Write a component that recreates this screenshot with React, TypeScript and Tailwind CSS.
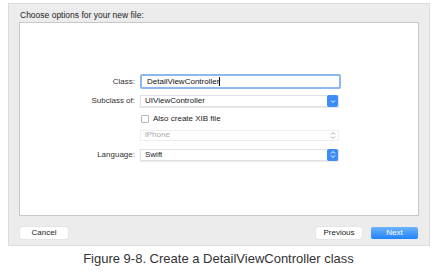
import React from "react";

const font = { fontFamily: '"Liberation Sans", Arial, sans-serif' };

function Chevrons({ color = "#fff" }: { color?: string }) {
  return (
    <svg width="6" height="9" viewBox="0 0 6 9">
      <path d="M1 3.5 L3 1.5 L5 3.5" fill="none" stroke={color} strokeWidth="1" />
      <path d="M1 5.5 L3 7.5 L5 5.5" fill="none" stroke={color} strokeWidth="1" />
    </svg>
  );
}

function Row({ label, className, children }: { label?: string; className?: string; children: React.ReactNode }) {
  return (
    <div className={"flex items-center " + (className ?? "")}>
      <div className="w-[120px] pr-[5px] text-right text-[8px] text-[#333]">{label}</div>
      {children}
    </div>
  );
}

export default function App() {
  return (
    <div className="w-[437px] h-[273px] bg-white relative" style={font}>
      <div className="absolute left-[8px] top-[3px] w-[422px] h-[243px] bg-[#ececec] border border-[#dcdcdc] flex flex-col">
        <div className="pl-[11px] pt-[5px] h-[18px] text-[8.5px] text-[#222]">
          Choose options for your new file:
        </div>
        <div className="mx-[10px] h-[194px] bg-white border border-[#c8c8c8] flex flex-col pt-[51px]">
          <Row label="Class:" className="h-[15px]">
            <div className="w-[201px] h-[15px] border-2 border-[#8ab8ef] rounded-[2px] flex items-center pl-[5px] text-[8px] text-[#111]">
              DetailViewController<span className="w-[1px] h-[9px] bg-black" />
            </div>
          </Row>
          <Row label="Subclass of:" className="h-[12px] mt-[6px]">
            <div className="w-[199px] h-[12px] border border-[#e2e2e2] shadow-[0_1px_1px_rgba(0,0,0,0.08)] flex items-center pl-[4px] text-[8px] text-[#222] justify-between">
              UIViewController
              <div className="w-[11px] h-[12px] rounded-[2px] bg-[#3b8cf3] flex items-center justify-center">
                <svg width="6" height="5" viewBox="0 0 6 5">
                  <path d="M1 1.5 L3 3.5 L5 1.5" fill="none" stroke="#fff" strokeWidth="1" />
                </svg>
              </div>
            </div>
          </Row>
          <Row className="h-[11px] mt-[6px]">
            <div className="flex items-center gap-[4px] h-[11px] pl-[1px]">
              <div className="w-[8px] h-[8px] border border-[#b8b8b8] rounded-[1px] bg-white" />
              <span className="text-[8px] text-[#222]">Also create XIB file</span>
            </div>
          </Row>
          <Row className="h-[10px] mt-[6px]">
            <div className="w-[199px] h-[11px] border border-[#eeeeee] flex items-center pl-[4px] pr-[2px] text-[8px] text-[#aaa] justify-between">
              iPhone
              <Chevrons color="#aaa" />
            </div>
          </Row>
          <Row label="Language:" className="h-[11px] mt-[9px]">
            <div className="w-[199px] h-[12px] border border-[#e2e2e2] shadow-[0_1px_1px_rgba(0,0,0,0.08)] flex items-center pl-[4px] text-[8px] text-[#222] justify-between">
              Swift
              <div className="w-[11px] h-[12px] rounded-[2px] bg-[#3b8cf3] flex items-center justify-center">
                <Chevrons />
              </div>
            </div>
          </Row>
        </div>
        <div className="flex items-center px-[11px] pt-[11px]">
          <div className="w-[48px] h-[12px] bg-white rounded-[2px] shadow-[0_0_1px_rgba(0,0,0,0.3)] flex items-center justify-center text-[8px] text-[#222]">
            Cancel
          </div>
          <div className="flex-1" />
          <div className="w-[46px] h-[12px] bg-white rounded-[2px] shadow-[0_0_1px_rgba(0,0,0,0.3)] flex items-center justify-center text-[8px] text-[#222]">
            Previous
          </div>
          <div className="w-[47px] h-[12px] ml-[9px] rounded-[2px] bg-gradient-to-b from-[#6cb3fa] to-[#1a82fb] flex items-center justify-center text-[8px] text-white">
            Next
          </div>
        </div>
      </div>
      <div className="absolute left-0 right-0 top-[249px] text-center text-[13px] text-[#333]">
        Figure 9-8. Create a DetailViewController class
      </div>
    </div>
  );
}
